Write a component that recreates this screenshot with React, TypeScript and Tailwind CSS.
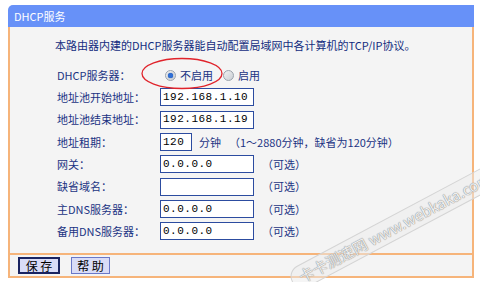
const font = { fontFamily: '"Noto Sans CJK SC", "Liberation Sans", sans-serif' };

type Row = { label: string; value?: string; note?: string; kind?: 'radio' | 'lease' };

const rows: Row[] = [
  { label: 'DHCP服务器：', kind: 'radio' },
  { label: '地址池开始地址：', value: '192.168.1.10' },
  { label: '地址池结束地址：', value: '192.168.1.19' },
  { label: '地址租期：', value: '120', kind: 'lease' },
  { label: '网关：', value: '0.0.0.0', note: '（可选）' },
  { label: '缺省域名：', value: '', note: '（可选）' },
  { label: '主DNS服务器：', value: '0.0.0.0', note: '（可选）' },
  { label: '备用DNS服务器：', value: '0.0.0.0', note: '（可选）' },
];

function Radio({ checked }: { checked?: boolean }) {
  return (
    <span className="w-[11px] h-[11px] rounded-full border border-[#9aa3ad] bg-gradient-to-br from-[#f2f2f2] to-[#c9ced4] flex items-center justify-center">
      {checked && <span className="w-[5px] h-[5px] rounded-full bg-[#2f6fd6] shadow-[0_0_1px_#0b3a8a]" />}
    </span>
  );
}

function Field({ value, w }: { value: string; w: string }) {
  return (
    <div
      className={`${w} h-[18px] border border-[#2c4ca0] bg-white flex items-center pl-[2px] text-[11px] text-black tracking-[0.5px]`}
      style={{ fontFamily: '"Liberation Mono", monospace' }}
    >
      {value}
    </div>
  );
}

export default function App() {
  return (
    <div className="w-[480px] h-[282px] bg-white relative overflow-hidden text-[#1b3383]" style={font}>
      <div className="ml-[8px] mt-[5px] w-[466px]">
        <div className="h-[22px] bg-[#6791f8] rounded-tl-[5px] flex items-center pl-[6px] text-[11px] text-white">
          DHCP服务
        </div>
        <div className="bg-[#f4f4f4] border-x-2 border-[#f6b47a]">
          <div className="h-[226px] pt-[10px]">
            <div className="h-[16px] pl-[45px] flex items-center text-[11px] text-[#132c7e]">
              本路由器内建的DHCP服务器能自动配置局域网中各计算机的TCP/IP协议。
            </div>
            <div className="mt-[11px] pl-[47px] flex flex-col text-[11px]">
              {rows.map(r => (
                <div key={r.label} className="h-[22.3px] flex items-center">
                  <div className="w-[103px] shrink-0">{r.label}</div>
                  {r.kind === 'radio' ? (
                    <div className="flex items-center pl-[5px]">
                      <Radio checked />
                      <span className="ml-[4px]">不启用</span>
                      <span className="ml-[10px]"><Radio /></span>
                      <span className="ml-[4px]">启用</span>
                    </div>
                  ) : r.kind === 'lease' ? (
                    <div className="flex items-center">
                      <Field value={r.value ?? ''} w="w-[32px]" />
                      <span className="ml-[7px]">分钟</span>
                      <span className="ml-[8px]">（1～2880分钟，缺省为120分钟）</span>
                    </div>
                  ) : (
                    <div className="flex items-center">
                      <Field value={r.value ?? ''} w="w-[94px]" />
                      {r.note && <span className="ml-[8px]">{r.note}</span>}
                    </div>
                  )}
                </div>
              ))}
            </div>
          </div>
          <div className="h-[25px] border-y-2 border-[#f6b47a] flex items-center pl-[8px] gap-[11px] text-[12px] text-black">
            <button className="w-[42px] h-[17px] border-2 border-[#1a2360] bg-[#d9dcf7] flex items-center justify-center whitespace-nowrap leading-none">
              保&nbsp;存
            </button>
            <button className="w-[39px] h-[17px] border border-[#6a78c8] bg-[#d9dcf7] flex items-center justify-center whitespace-nowrap leading-none">
              帮&nbsp;助
            </button>
          </div>
        </div>
      </div>

      {/* red highlight ellipse */}
      <svg className="absolute left-[140px] top-[57px]" width="84" height="33" viewBox="0 0 84 33">
        <ellipse cx="42" cy="16.5" rx="40" ry="15" fill="none" stroke="#e0232b" strokeWidth="1.3" />
      </svg>

      {/* watermark */}
      <div className="absolute left-[292px] top-[270px] origin-left -rotate-[28deg]">
        <div className="px-[8px] h-[24px] flex items-center rounded-[12px] border border-[#d4d4d4] bg-[#ececec]/50 text-[15px] text-[#efefef] whitespace-nowrap [text-shadow:0_0_1px_#8a8a8a,0_0_1px_#8a8a8a]">
          卡卡测速网 www.webkaka.com
        </div>
      </div>
    </div>
  );
}
